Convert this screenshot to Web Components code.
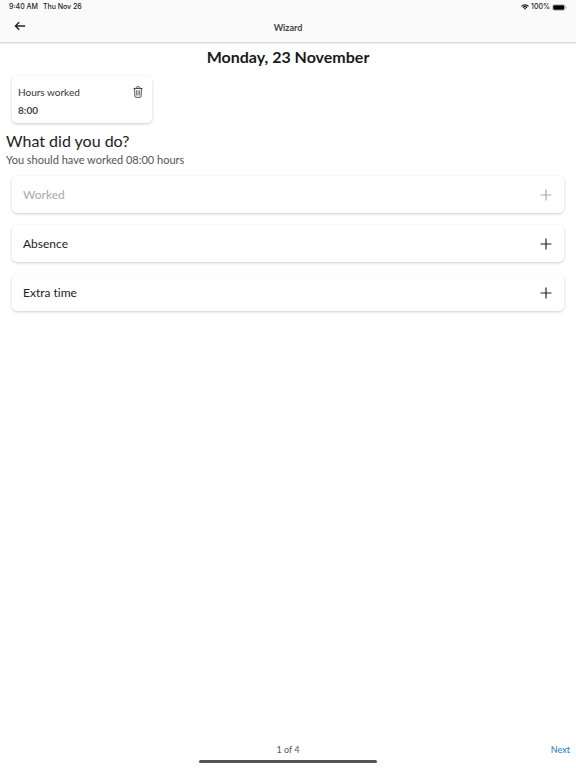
<!DOCTYPE html>
<html lang="en">
<head>
<meta charset="utf-8">
<meta name="viewport" content="width=device-width, initial-scale=1">
<title>Wizard</title>
<style>
  body {
    margin: 0;
    background: #fff;
    color: #222;
    font-family: Lato, "Liberation Sans", sans-serif;
    font-variant-ligatures: none;
  }
</style>
</head>
<body>
<wizard-page>
  <status-bar slot="top" time="9:40 AM" date="Thu Nov 26" battery="100%"></status-bar>
  <wizard-header slot="top">Wizard</wizard-header>
  <day-title>Monday, 23 November</day-title>
  <entry-card label="Hours worked">8:00</entry-card>
  <wizard-question text="What did you do?">You should have worked 08:00 hours</wizard-question>
  <option-list>
    <option-row disabled>Worked</option-row>
    <option-row>Absence</option-row>
    <option-row>Extra time</option-row>
  </option-list>
  <wizard-footer slot="bottom" next="Next">1 of 4</wizard-footer>
</wizard-page>

<script>
// creates the open shadow root and fills it from a template
const render = (element, html) => {
  const template = document.createElement('template');
  template.innerHTML = html;
  const root = element.attachShadow({ mode: 'open' });
  root.appendChild(template.content.cloneNode(true));
  return root;
};

class WizardPage extends HTMLElement {
  constructor() {
    super();
    render(this, `
      <style>
        :host { display: flex; flex-direction: column; min-height: 100vh; }
        header {
          background: #fafafa;
          border-bottom: 1px solid #dadada;
          box-shadow: 0 1px 1px #eee;
        }
        main { flex: 1; }
      </style>
      <header><slot name="top"></slot></header>
      <main><slot></slot></main>
      <slot name="bottom"></slot>
    `);
  }
}

class StatusBar extends HTMLElement {
  constructor() {
    super();
    const root = render(this, `
      <style>
        :host {
          display: flex;
          align-items: center;
          height: 14px;
          padding: 0 9px;
          font: 500 7px/14px Inter, sans-serif;
          color: #222;
        }
        .date { margin-left: 5px; flex: 1; }
        .battery { margin: 0 2px; }
        svg { display: block; }
      </style>
      <span class="time"></span>
      <span class="date"></span>
      <svg width="8" height="6" viewBox="0 0 16 12" fill="none" stroke="#111" stroke-width="2.2">
        <path d="M1 4.6a10 10 0 0 1 14 0M3.7 7.4a6.2 6.2 0 0 1 8.6 0"/>
        <path d="M8 11.6 5.6 9.2a3.4 3.4 0 0 1 4.8 0z" fill="#111" stroke="none"/>
      </svg>
      <span class="battery"></span>
      <svg width="15" height="7" viewBox="0 0 30 14">
        <rect x="1" y="1" width="25" height="12" rx="3.5" fill="none" stroke="#999"/>
        <rect x="2.5" y="2.5" width="22" height="9" rx="2" fill="#000"/>
        <path d="M27.5 5v4q1.8-.5 1.8-2t-1.8-2z" fill="#999"/>
      </svg>
    `);
    for (const name of ['time', 'date', 'battery']) {
      root.querySelector('.' + name).textContent = this.getAttribute(name);
    }
  }
}

class WizardHeader extends HTMLElement {
  constructor() {
    super();
    const root = render(this, `
      <style>
        :host {
          display: grid;
          grid-template-columns: 1fr auto 1fr;
          height: 28px;
          padding: 0 12px;
        }
        button {
          justify-self: start;
          align-self: start;
          width: 16px;
          height: 24px;
          padding: 0;
          border: 0;
          background: none;
          cursor: pointer;
        }
        svg { display: block; margin: 0 auto; }
        h1 { margin: 0; font-size: 9px; line-height: 28px; font-weight: 700; color: #444; }
      </style>
      <button aria-label="Back">
        <svg width="12" height="10" viewBox="0 0 12 10" fill="none" stroke="#222" stroke-width="1.4">
          <path d="M11.2 5H1.5M5.2 1.2 1.4 5l3.8 3.8"/>
        </svg>
      </button>
      <h1><slot></slot></h1>
    `);
    root.querySelector('button').addEventListener('click', () => {
      this.dispatchEvent(new CustomEvent('back', { bubbles: true }));
    });
  }
}

class DayTitle extends HTMLElement {
  constructor() {
    super();
    render(this, `
      <style>
        :host { display: block; padding: 4px 6px 0; text-align: center; }
        h2 { margin: 0; font-size: 16px; line-height: 20px; font-weight: 700; color: #1a1a1a; }
      </style>
      <h2><slot></slot></h2>
    `);
  }
}

class EntryCard extends HTMLElement {
  constructor() {
    super();
    const root = render(this, `
      <style>
        :host {
          display: grid;
          grid-template-columns: 1fr auto;
          align-items: center;
          box-sizing: border-box;
          width: 140px;
          margin: 9px 12px 0;
          padding: 7px 7px 4px 6px;
          border-radius: 5px;
          background: #fff;
          box-shadow: 0 1px 3px rgba(0, 0, 0, .2);
          font-size: 10px;
          line-height: 18px;
          color: #333;
        }
        button {
          padding: 0 2px;
          border: 0;
          background: none;
          cursor: pointer;
        }
        svg { display: block; }
        strong { color: #444; }
      </style>
      <span></span>
      <button aria-label="Delete">
        <svg width="10" height="12" viewBox="0 0 20 24" fill="none" stroke="#333" stroke-width="1.7">
          <path d="M1 5h18M6.500 5V3.200Q6.500 1.500 8 1.500h4q1.500 0 1.500 1.700V5M3 5l.9 15.600q.1 2 2 2h8.200q1.900 0 2-2L17 5"/>
          <path d="M7 8.500l.3 10.500M10 8.500V19M13 8.500 12.700 19" stroke-width="1.3"/>
        </svg>
      </button>
      <strong><slot></slot></strong>
    `);
    root.querySelector('span').textContent = this.getAttribute('label');
    root.querySelector('button').addEventListener('click', () => {
      this.dispatchEvent(new CustomEvent('removeEntry', { bubbles: true }));
      this.remove();
    });
  }
}

class WizardQuestion extends HTMLElement {
  constructor() {
    super();
    const root = render(this, `
      <style>
        :host { display: block; padding: 8px 6px 0; }
        h3 { margin: 0; font-size: 16px; line-height: 20px; font-weight: 400; color: #222; }
        p { margin: 0; font-size: 11px; line-height: 18px; color: #555; }
      </style>
      <h3></h3>
      <p><slot></slot></p>
    `);
    root.querySelector('h3').textContent = this.getAttribute('text');
  }
}

class OptionList extends HTMLElement {
  constructor() {
    super();
    render(this, `
      <style>
        :host { display: grid; gap: 12px; padding: 7px 12px; }
      </style>
      <slot></slot>
    `);
  }
}

class OptionRow extends HTMLElement {
  constructor() {
    super();
    const root = render(this, `
      <style>
        :host { display: block; }
        button {
          display: flex;
          align-items: center;
          justify-content: space-between;
          width: 100%;
          height: 37px;
          padding: 0 12px 0 11px;
          border: 0;
          border-radius: 5px;
          background: #fff;
          box-shadow: 0 1px 3px rgba(0, 0, 0, .2);
          color: #222;
          font: inherit;
          font-size: 12px;
          line-height: 18px;
          cursor: pointer;
        }
        button:disabled { color: #aaa; cursor: default; }
        svg { display: block; }
      </style>
      <button>
        <slot></slot>
        <svg width="12" height="12" viewBox="0 0 12 12" stroke="currentColor" stroke-width="1.2">
          <path d="M6 .5v11M.5 6h11"/>
        </svg>
      </button>
    `);
    root.querySelector('button').disabled = this.hasAttribute('disabled');
  }
}

class WizardFooter extends HTMLElement {
  constructor() {
    super();
    const root = render(this, `
      <style>
        :host { display: block; padding: 0 0 5px; font-size: 9px; line-height: 18px; }
        nav { display: grid; grid-template-columns: 1fr auto 1fr; padding: 0 6px; }
        span { grid-column: 2; color: #555; }
        a { justify-self: end; color: #1a78b8; text-decoration: none; }
        .home {
          width: 31%;
          height: 3px;
          margin: 1px auto 0;
          border-radius: 2px;
          background: #555;
        }
      </style>
      <nav>
        <span><slot></slot></span>
        <a href="#next"></a>
      </nav>
      <div class="home"></div>
    `);
    root.querySelector('a').textContent = this.getAttribute('next');
  }
}

customElements.define('wizard-page', WizardPage);
customElements.define('status-bar', StatusBar);
customElements.define('wizard-header', WizardHeader);
customElements.define('day-title', DayTitle);
customElements.define('entry-card', EntryCard);
customElements.define('wizard-question', WizardQuestion);
customElements.define('option-list', OptionList);
customElements.define('option-row', OptionRow);
customElements.define('wizard-footer', WizardFooter);
</script>
</body>
</html>
